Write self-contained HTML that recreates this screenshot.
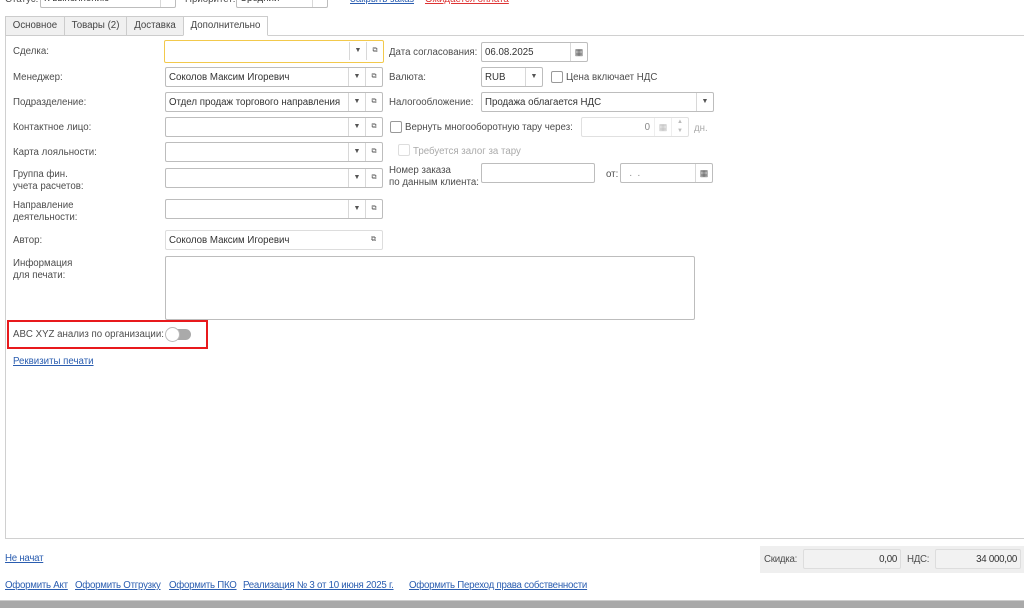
<!DOCTYPE html>
<html><head><meta charset="utf-8"><style>
*{box-sizing:border-box;margin:0;padding:0}
body{width:1024px;height:608px;overflow:hidden;background:#fff;font-family:"Liberation Sans",Arial,sans-serif;font-size:9.7px;color:#4d4d4d;position:relative}
.a{position:absolute}
.lbl{position:absolute;color:#4d4d4d;font-size:9.7px;line-height:12px;white-space:nowrap}
.inp{position:absolute;border:1px solid #bdbdbd;border-radius:2px;background:#fff;height:20px;font-size:9.7px;color:#333;line-height:19px;padding-left:3px;white-space:nowrap}
.btn{position:absolute;top:0;width:17px;height:18px;border-left:1px solid #d8d8d8;text-align:center;font-size:7px;color:#555;line-height:18px}
.lnk{position:absolute;color:#2a5db0;text-decoration:underline;font-size:9.7px;white-space:nowrap}
.bl{font-size:9.7px;letter-spacing:-0.25px}
.cb{position:absolute;width:12px;height:12px;border:1px solid #999;border-radius:2px;background:#fff}
.tab{position:absolute;top:16px;height:20px;border:1px solid #ccc;background:#f0f0f0;color:#444;line-height:18px;text-align:center;font-size:9.7px}
</style></head><body>
<div class="lbl" style="left:5px;top:-6px">Статус:</div>
<div class="inp" style="left:40px;top:-12px;width:136px;">К выполнению<div class="btn" style="right:0;width:15px"></div></div>
<div class="lbl" style="left:185px;top:-6px">Приоритет:</div>
<div class="inp" style="left:236px;top:-12px;width:92px;">Средний<div class="btn" style="right:0;width:15px"></div></div>
<div class="lnk" style="left:350px;top:-6px">Закрыть заказ</div>
<div class="lnk" style="left:425px;top:-6px;color:#d33">Ожидается оплата</div>
<div class="a" style="left:5px;top:35px;width:1020px;height:504px;border:1px solid #d0d0d0;border-right:none"></div>
<div class="tab" style="left:5px;width:60px">Основное</div>
<div class="tab" style="left:64px;width:63px">Товары (2)</div>
<div class="tab" style="left:126px;width:58px">Доставка</div>
<div class="tab" style="left:183px;width:85px;background:#fff;border-bottom-color:#fff;height:20px">Дополнительно</div>

<div class="lbl" style="left:13px;top:46px">Сделка:</div>
<div class="inp" style="left:164px;top:40px;width:220px;height:23px;border:1px solid #f2c94c"><div class="btn" style="right:17px;top:1px">▼</div><div class="btn" style="right:0;top:1px">⧉</div></div>
<div class="lbl" style="left:13px;top:72px">Менеджер:</div>
<div class="inp" style="left:165px;top:67px;width:218px">Соколов Максим Игоревич<div class="btn" style="right:17px">▼</div><div class="btn" style="right:0">⧉</div></div>
<div class="lbl" style="left:13px;top:97px">Подразделение:</div>
<div class="inp" style="left:165px;top:92px;width:218px">Отдел продаж торгового направления<div class="btn" style="right:17px;background:#fff">▼</div><div class="btn" style="right:0">⧉</div></div>
<div class="lbl" style="left:13px;top:122px">Контактное лицо:</div>
<div class="inp" style="left:165px;top:117px;width:218px"><div class="btn" style="right:17px">▼</div><div class="btn" style="right:0">⧉</div></div>
<div class="lbl" style="left:13px;top:147px">Карта лояльности:</div>
<div class="inp" style="left:165px;top:142px;width:218px"><div class="btn" style="right:17px">▼</div><div class="btn" style="right:0">⧉</div></div>
<div class="lbl" style="left:13px;top:169px">Группа фин.<br>учета расчетов:</div>
<div class="inp" style="left:165px;top:168px;width:218px"><div class="btn" style="right:17px">▼</div><div class="btn" style="right:0">⧉</div></div>
<div class="lbl" style="left:13px;top:200px">Направление<br>деятельности:</div>
<div class="inp" style="left:165px;top:199px;width:218px"><div class="btn" style="right:17px">▼</div><div class="btn" style="right:0">⧉</div></div>
<div class="lbl" style="left:13px;top:235px">Автор:</div>
<div class="inp" style="left:165px;top:230px;width:218px;border-color:#ddd">Соколов Максим Игоревич<div class="btn" style="right:0;border:none">⧉</div></div>
<div class="lbl" style="left:13px;top:258px">Информация<br>для печати:</div>
<div class="inp" style="left:165px;top:256px;width:530px;height:64px"></div>

<div class="a" style="left:7px;top:320px;width:201px;height:29px;border:2px solid #e8191c"></div>
<div class="lbl" style="left:13px;top:329px">ABC XYZ анализ по организации:</div>
<div class="a" style="left:167px;top:329px;width:24px;height:11px;border-radius:6px;background:#aaa"></div>
<div class="a" style="left:165px;top:327px;width:15px;height:15px;border-radius:50%;background:#fff;border:1px solid #bbb"></div>
<div class="lnk" style="left:13px;top:356px">Реквизиты печати</div>

<div class="lbl" style="left:389px;top:47px">Дата согласования:</div>
<div class="inp" style="left:481px;top:42px;width:107px">06.08.2025<div class="btn" style="right:0;font-size:9px">▦</div></div>
<div class="lbl" style="left:389px;top:72px">Валюта:</div>
<div class="inp" style="left:481px;top:67px;width:62px">RUB<div class="btn" style="right:0">▼</div></div>
<div class="cb" style="left:551px;top:71px"></div>
<div class="lbl" style="left:566px;top:72px">Цена включает НДС</div>
<div class="lbl" style="left:389px;top:97px">Налогообложение:</div>
<div class="inp" style="left:481px;top:92px;width:233px">Продажа облагается НДС<div class="btn" style="right:0">▼</div></div>
<div class="cb" style="left:390px;top:121px"></div>
<div class="lbl" style="left:405px;top:122px">Вернуть многооборотную тару через:</div>
<div class="inp" style="left:581px;top:117px;width:108px;border-color:#e0e0e0;color:#888;text-align:right;padding-right:38px">0<div class="btn" style="right:17px;border-color:#eee;color:#bbb;font-size:9px">▦</div><div class="btn" style="right:0;border-color:#eee;color:#bbb;font-size:6px;line-height:9px">▲<br>▼</div></div>
<div class="lbl" style="left:694px;top:123px;color:#aaa">дн.</div>
<div class="cb" style="left:398px;top:144px;border-color:#ddd"></div>
<div class="lbl" style="left:413px;top:146px;color:#aaa">Требуется залог за тару</div>
<div class="lbl" style="left:389px;top:165px">Номер заказа<br>по данным клиента:</div>
<div class="inp" style="left:481px;top:163px;width:114px"></div>
<div class="lbl" style="left:606px;top:169px">от:</div>
<div class="inp" style="left:620px;top:163px;width:93px;color:#888">&nbsp;&nbsp;.&nbsp;&nbsp;.<div class="btn" style="right:0;font-size:9px">▦</div></div>

<div class="lnk bl" style="left:5px;top:553px">Не начат</div>
<div class="a" style="left:760px;top:546px;width:264px;height:27px;background:#efefef"></div>
<div class="lbl bl" style="left:764px;top:554px">Скидка:</div>
<div class="inp bl" style="left:803px;top:549px;width:98px;background:#f2f2f2;border-color:#ddd;text-align:right;padding-right:3px">0,00</div>
<div class="lbl bl" style="left:907px;top:554px">НДС:</div>
<div class="inp bl" style="left:935px;top:549px;width:86px;background:#f2f2f2;border-color:#ddd;text-align:right;padding-right:3px">34 000,00</div>
<div class="lnk bl" style="left:5px;top:580px">Оформить Акт</div>
<div class="lnk bl" style="left:75px;top:580px">Оформить Отгрузку</div>
<div class="lnk bl" style="left:169px;top:580px">Оформить ПКО</div>
<div class="lnk bl" style="left:243px;top:580px">Реализация № 3 от 10 июня 2025 г.</div>
<div class="lnk bl" style="left:409px;top:580px">Оформить Переход права собственности</div>
<div class="a" style="left:0;top:600px;width:1024px;height:8px;background:#a9a9a9;border-top:1px solid #ccc"></div>
</body></html>
